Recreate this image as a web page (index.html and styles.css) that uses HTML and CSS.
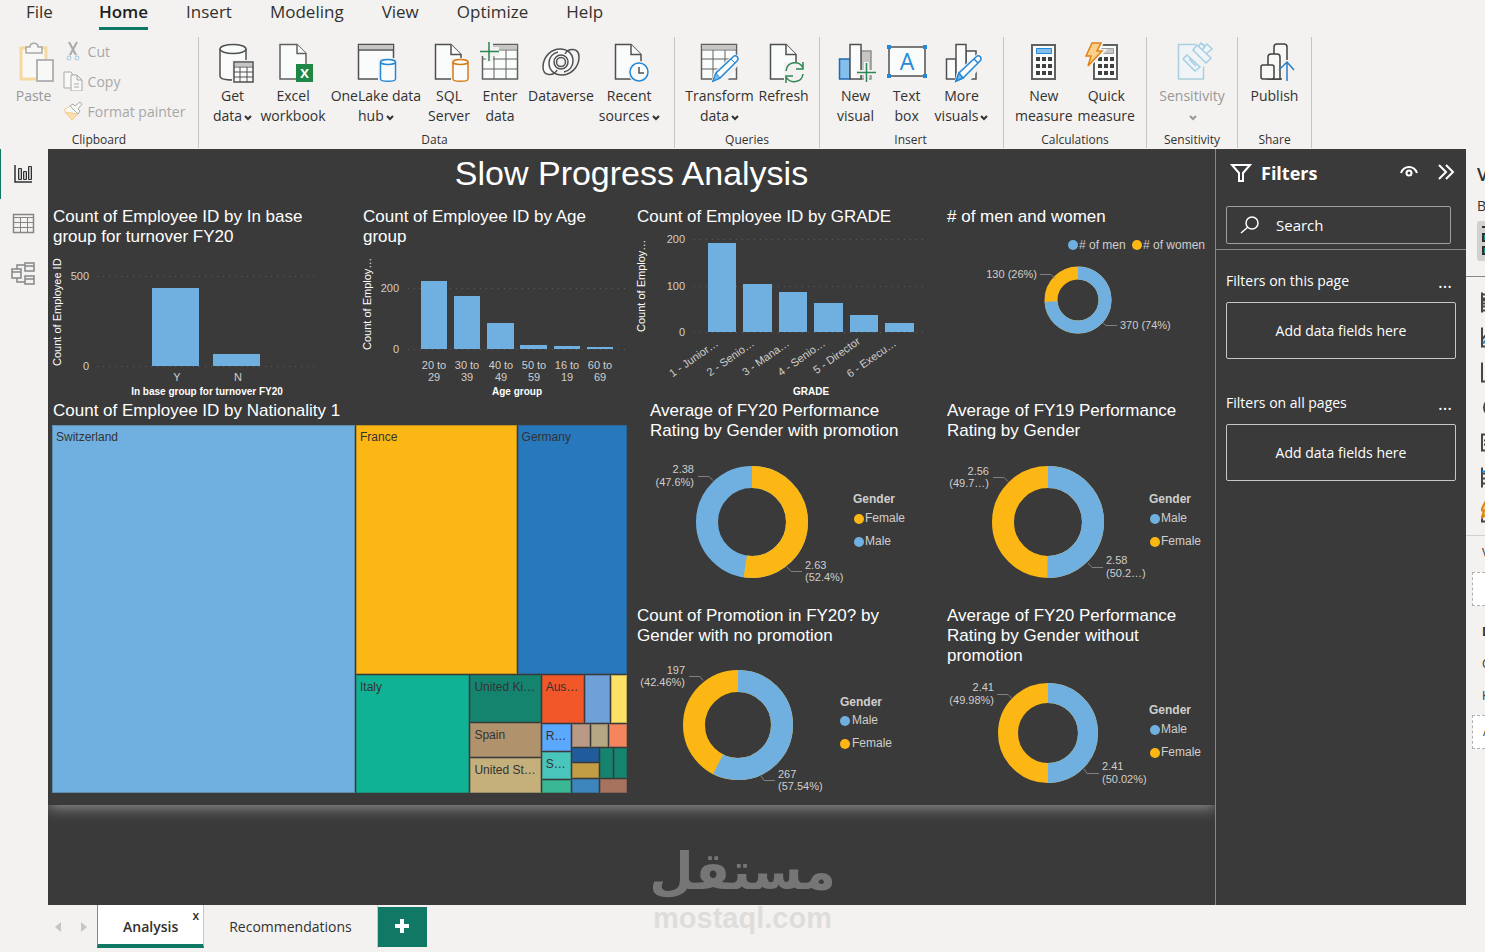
FILE: index.html
```html
<!DOCTYPE html>
<html lang="en">
<head>
    <meta charset="utf-8">
    <title>Slow Progress Analysis</title>
    <link rel="stylesheet" href="styles.css">
</head>
<body>

<header class="ribbon">
    <nav class="menu">
        <a href="#">File</a>
        <a href="#" class="active">Home</a>
        <a href="#">Insert</a>
        <a href="#">Modeling</a>
        <a href="#">View</a>
        <a href="#">Optimize</a>
        <a href="#">Help</a>
    </nav>

    <div class="groups">
        <!-- Clipboard -->
        <section class="group g-clipboard">
            <div class="tools">
                <button class="tool" disabled>
                    <svg class="icon" viewBox="0 0 40 40" fill="#f8f8f7" stroke-width="2">
                        <path d="M7 6h25v31H7z" stroke="#f7d9a0" stroke-width="3"/>
                        <path d="M12 5h4c0-5 8-5 8 0h4v6H12z" stroke="#a8a8a8" stroke-width="1.500"/>
                        <path d="M23 18h16v21H23z" stroke="#b4b4b4"/>
                    </svg>
                    <span>Paste</span>
                </button>
                <div class="small-tools">
                    <button class="small-tool" disabled>
                        <svg viewBox="0 0 20 20" fill="none" stroke="#a9a9a9"><path d="M6 1l7 13M14 1L7 14" stroke-width="2"/><circle cx="6" cy="17" r="2" stroke="#9cc7de"/><circle cx="14" cy="17" r="2" stroke="#9cc7de"/></svg>
                        <span>Cut</span>
                    </button>
                    <button class="small-tool" disabled>
                        <svg viewBox="0 0 20 20" fill="#f8f8f7" stroke="#a9a9a9"><path d="M8 17H1V1h7l2 3"/><path d="M8 4h6l5 5v11H8zM14 4v5h5M11 13h5M11 16h5"/></svg>
                        <span>Copy</span>
                    </button>
                    <button class="small-tool" disabled>
                        <svg viewBox="0 0 20 20" fill="#f8f8f7" stroke="#a9a9a9"><path d="M1 9l8 9 6-5-8-8z" stroke="#f2cd8c"/><path d="M2 11l7 8 6-6z" fill="#f9dfae" stroke="#f2cd8c"/><path d="M7 5l8 8 2-3-2-2 4-5-2-2-5 4-2-2z"/></svg>
                        <span>Format painter</span>
                    </button>
                </div>
            </div>
            <h2>Clipboard</h2>
        </section>

        <!-- Data -->
        <section class="group g-data">
            <div class="tools">
                <button class="tool">
                    <svg class="icon" viewBox="0 0 40 40" fill="#fafcfb" stroke="#505050">
                        <path d="M7 7v27c0 3 6 4 13 4s13-1 13-4V7" stroke-width="1.5"/>
                        <ellipse cx="20" cy="7" rx="13" ry="4.5" stroke-width="1.5"/>
                        <path d="M19 18h23v23H19z" fill="#f3f2f1" stroke="none"/>
                        <path d="M21 20h19v20H21z" stroke-width="1.5"/>
                        <path d="M22 21h17v3H22z" fill="#c8c6c4" stroke="none"/>
                        <path d="M21 25h19M21 30h19M21 35h19M27 25v15M34 25v15"/>
                    </svg>
                    <span>Get<br>data<svg class="chev" viewBox="0 0 8 6"><path d="M1 1l3 3 3-3"/></svg></span>
                </button>
                <button class="tool">
                    <svg class="icon" viewBox="0 0 40 40" fill="#fafcfb" stroke="#606060" stroke-width="1.5">
                        <path d="M7 2.500h17l9 9V37H7z"/><path d="M24 2.500v9h9"/>
                        <path d="M23 22h17v18H23z" fill="#1e8745" stroke="none"/>
                        <text x="31.500" y="36" class="excel-x">X</text>
                    </svg>
                    <span>Excel<br>workbook</span>
                </button>
                <button class="tool">
                    <svg class="icon" viewBox="0 0 40 40" fill="#fafcfb" stroke="#505050" stroke-width="1.500">
                        <path d="M2.500 2.500h35V37h-35z"/><path d="M3 3h34v4H3z" fill="#c8c6c4" stroke="none"/><path d="M2 8h36"/>
                        <path d="M22 16h20v26H22z" fill="#f3f2f1" stroke="none"/>
                        <path d="M24.500 20v17c0 3 15 3 15 0V20" stroke="#2488d8"/><ellipse cx="32" cy="20" rx="7.500" ry="2.500" stroke="#2488d8"/>
                    </svg>
                    <span>OneLake data<br>hub<svg class="chev" viewBox="0 0 8 6"><path d="M1 1l3 3 3-3"/></svg></span>
                </button>
                <button class="tool">
                    <svg class="icon" viewBox="0 0 40 40" fill="#fafcfb" stroke="#505050" stroke-width="1.500">
                        <path d="M6.500 2.500H22l10 10V37H6.500z"/><path d="M22 2.500v10h10"/>
                        <path d="M22 16h20v26H22z" fill="#f3f2f1" stroke="none"/>
                        <path d="M24 20v17c0 3 15 3 15 0V20" stroke="#d87b16"/><ellipse cx="31.500" cy="20" rx="7.500" ry="2.500" stroke="#d87b16"/>
                    </svg>
                    <span>SQL<br>Server</span>
                </button>
                <button class="tool">
                    <svg class="icon" viewBox="0 0 40 40" fill="#fafcfb" stroke="#606060">
                        <path d="M2.500 2.500h35V37h-35z" stroke-width="1.500"/><path d="M3 3h34v4H3z" fill="#c8c6c4" stroke="none"/>
                        <path d="M2 8h36M2 17h36M2 27h36M14 8v29M26 8v29"/>
                        <path d="M-1 -1h14v6h6v9h-6v6H6v-6H-1z" fill="#f3f2f1" stroke="none"/>
                        <path d="M9 0v19M0 9.500h19" stroke="#2c8553" stroke-width="1.500"/>
                    </svg>
                    <span>Enter<br>data</span>
                </button>
                <button class="tool">
                    <svg class="icon" viewBox="0 0 40 40" fill="#fafcfb" stroke="#505050" stroke-width="1.500">
                        <path d="M16 28c-3 6-14 7-14-3C2 14 11 7 19 7c8 0 13 5 13 12 0 6-4 10-9 11"/>
                        <path d="M24 12c3-6 14-7 14 3 0 11-9 18-17 18-8 0-13-5-13-12 0-6 4-10 9-11" fill="none"/>
                        <circle cx="20" cy="20" r="7" fill="none"/>
                        <circle cx="20" cy="20" r="4.500" fill="#f3f2f1"/>
                    </svg>
                    <span>Dataverse</span>
                </button>
                <button class="tool">
                    <svg class="icon" viewBox="0 0 40 40" fill="#fafcfb" stroke="#505050" stroke-width="1.500">
                        <path d="M6.500 2.500H22l10 10V37H6.500z"/><path d="M22 2.500v10h10"/>
                        <circle cx="30" cy="30" r="11" fill="#f3f2f1" stroke="none"/>
                        <circle cx="30" cy="30" r="9" stroke="#2488d8"/><path d="M30 25v6h5" fill="none"/>
                    </svg>
                    <span>Recent<br>sources<svg class="chev" viewBox="0 0 8 6"><path d="M1 1l3 3 3-3"/></svg></span>
                </button>
            </div>
            <h2>Data</h2>
        </section>

        <!-- Queries -->
        <section class="group g-queries">
            <div class="tools">
                <button class="tool">
                    <svg class="icon" viewBox="0 0 40 40" fill="#fafcfb" stroke="#606060">
                        <path d="M2.500 2.500h35V37h-35z" stroke-width="1.500"/><path d="M3 3h34v4H3z" fill="#c8c6c4" stroke="none"/>
                        <path d="M2 8h36M2 17h36M2 27h36M14 8v29M26 8v29"/>
                        <path d="M12 42l3-12 20-18 7 2v5L26 42z" fill="#f3f2f1" stroke="none"/>
                        <path d="M14 39l3-8 17-16c3-3 7 1 4 4L21 36z" stroke="#2488d8" stroke-width="1.500"/><path d="M14 39l3-8 4 5z" fill="#7db9e8" stroke="#2488d8"/><path d="M32 17l4 4" stroke="#2488d8"/>
                    </svg>
                    <span>Transform<br>data<svg class="chev" viewBox="0 0 8 6"><path d="M1 1l3 3 3-3"/></svg></span>
                </button>
                <button class="tool">
                    <svg class="icon" viewBox="0 0 40 40" fill="#fafcfb" stroke="#505050" stroke-width="1.500">
                        <path d="M6.500 2.500H22l10 10V37H6.500z"/><path d="M22 2.500v10h10"/>
                        <path d="M20 20h22v22H20z" fill="#f3f2f1" stroke="none"/>
                        <path d="M22 29c1-10 14-11 17-3M39 20v7h-7M39 32c-1 9-13 10-17 3M22 41v-7h7" fill="none" stroke="#2c8553"/>
                    </svg>
                    <span>Refresh</span>
                </button>
            </div>
            <h2>Queries</h2>
        </section>

        <!-- Insert -->
        <section class="group g-insert">
            <div class="tools">
                <button class="tool">
                    <svg class="icon" viewBox="0 0 40 40" fill="#fafcfb" stroke="#505050" stroke-width="1.500">
                        <path d="M25 9h10v28H25z" fill="#c8c6c4" stroke="#909090"/>
                        <path d="M3.500 17H14v20H3.500z" fill="#83beec" stroke="#1f6cb0"/><path d="M14 2.500h11V37H14z"/>
                        <path d="M28 20h5v8h8v5h-8v8h-5v-8h-8v-5h8z" fill="#f3f2f1" stroke="none"/>
                        <path d="M30.500 21v19M21 30.500h19" stroke="#2c8553"/>
                    </svg>
                    <span>New<br>visual</span>
                </button>
                <button class="tool">
                    <svg class="icon" viewBox="0 0 40 40" fill="#fafcfb" stroke="#505050" stroke-width="1.500">
                        <path d="M2 5h36v29H2z"/>
                        <path d="M0 3h4v4H0zM36 3h4v4h-4zM0 32h4v4H0zM36 32h4v4h-4z" fill="#2488d8" stroke="none"/>
                        <text x="20" y="28" class="box-a">A</text>
                    </svg>
                    <span>Text<br>box</span>
                </button>
                <button class="tool">
                    <svg class="icon" viewBox="0 0 40 40" fill="#fafcfb" stroke="#505050" stroke-width="1.500">
                        <path d="M24 9h10v28H24z"/><path d="M4.500 17H14v20H4.500z"/><path d="M14 2.500h10V37H14z"/>
                        <path d="M12 42l3-12 20-18 7 2v5L26 42z" fill="#f3f2f1" stroke="none"/>
                        <path d="M14 39l3-8 17-16c3-3 7 1 4 4L21 36z" stroke="#2488d8"/><path d="M14 39l3-8 4 5z" fill="#7db9e8" stroke="#2488d8"/><path d="M32 17l4 4" stroke="#2488d8"/>
                    </svg>
                    <span>More<br>visuals<svg class="chev" viewBox="0 0 8 6"><path d="M1 1l3 3 3-3"/></svg></span>
                </button>
            </div>
            <h2>Insert</h2>
        </section>

        <!-- Calculations -->
        <section class="group g-calc">
            <div class="tools">
                <button class="tool">
                    <svg class="icon" viewBox="0 0 40 40" fill="#fafcfb" stroke="#606060" stroke-width="2">
                        <path d="M8 3h23v34H8z"/><path d="M12.500 6.500h15v5h-15z" fill="#83beec" stroke="#2488d8" stroke-width="1"/>
                        <path d="M12 17h16M12 24h16M12 31h16" stroke="#404040" stroke-width="4" stroke-dasharray="4 2"/>
                    </svg>
                    <span>New<br>measure</span>
                </button>
                <button class="tool">
                    <svg class="icon" viewBox="0 0 40 40" fill="#fafcfb" stroke="#606060" stroke-width="2">
                        <path d="M8 3h23v34H8z"/><path d="M12.500 6.500h15v5h-15z" fill="#c8c6c4" stroke="#a0a0a0" stroke-width="1"/>
                        <path d="M12 17h16M12 24h16M12 31h16" stroke="#404040" stroke-width="4" stroke-dasharray="4 2"/>
                        <path d="M6 0h10l-4 9h5L1 25l3-11H0z" fill="#fbd08a" stroke="#f3f2f1" stroke-width="4"/>
                        <path d="M6 1h9l-4 8h5L2 24l3-10H0z" fill="#fbd08a" stroke="#e08214" stroke-width="1.500"/>
                    </svg>
                    <span>Quick<br>measure</span>
                </button>
            </div>
            <h2>Calculations</h2>
        </section>

        <!-- Sensitivity -->
        <section class="group g-sens">
            <div class="tools">
                <button class="tool" disabled>
                    <svg class="icon" viewBox="0 0 40 40" fill="#f0f4f6" stroke="#a3cfe6" stroke-width="1.500">
                        <path d="M6.500 2.500h25V37h-25z" stroke="#a9cfdc"/>
                        <path d="M17 11l14 14 10-9L26 0z" fill="#f3f2f1" stroke="none"/>
                        <path d="M15 13l13 12-5 4-12-12zM17 17l7 7"/><path d="M21 8l4-5 14 13-5 5zM26 5l3-4 4 4M30 8l5-6 5 5-6 5"/>
                    </svg>
                    <span>Sensitivity<br><svg class="chev" viewBox="0 0 8 6"><path d="M1 1l3 3 3-3"/></svg></span>
                </button>
            </div>
            <h2>Sensitivity</h2>
        </section>

        <!-- Share -->
        <section class="group g-share">
            <div class="tools">
                <button class="tool">
                    <svg class="icon" viewBox="0 0 40 40" fill="#f8f8f7" stroke="#404040" stroke-width="1.500">
                        <path d="M19 14V5c0-2 1-3 3-3h7c2 0 3 1 3 3v32H19z"/>
                        <path d="M13 24v-9c0-2 1-3 3-3h6c2 0 3 1 3 3v22H13z"/>
                        <rect x="6" y="23" width="13" height="14" rx="2"/>
                        <path d="M27 18h13v22H27z" fill="#f3f2f1" stroke="none"/>
                        <path d="M32 39V21M24 28l8-8 7 8" fill="none" stroke="#2a7fc4"/>
                    </svg>
                    <span>Publish</span>
                </button>
            </div>
            <h2>Share</h2>
        </section>
    </div>
</header>

<main class="workspace">
    <nav class="views">
        <button class="view active" aria-label="Report view">
            <svg viewBox="0 0 24 24" fill="#b8b8b8" stroke="#303030"><path d="M4 3v17h17" fill="none" stroke-width="1.500"/><path d="M7.500 6.500h3v11h-3zM12.500 9.500h3v8h-3zM17.500 4.500h3v13h-3z"/></svg>
        </button>
        <button class="view" aria-label="Table view">
            <svg viewBox="0 0 24 24" fill="none" stroke="#868686"><path d="M2.500 2.500h20v18h-20z" stroke-width="1.500"/><path d="M2 5.500h21M2 10.500h21M2 15.500h21M9.500 5v16M16.500 5v16"/></svg>
        </button>
        <button class="view" aria-label="Model view">
            <svg viewBox="0 0 24 24" fill="none" stroke="#868686" stroke-width="1.500"><path d="M1 7h9v9H1zM14 1h9v8h-9zM14 14h9v8h-9zM1 10h9M14 4h9M14 17h9M6 7V3h8M6 16v4h8"/></svg>
        </button>
    </nav>

    <div class="canvas">
        <div class="report">
            <h1>Slow Progress Analysis</h1>

            <div class="visuals">
                <section class="visual">
                    <h3>Count of Employee ID by In base group for turnover FY20</h3>
                    <svg class="chart" width="300" height="154">
                        <path class="grid-line" d="M49 29.500h221M49 119.500h221"/>
                        <rect class="bar" x="104" y="41" width="47" height="78"/>
                        <rect class="bar" x="165" y="107" width="47" height="12"/>
                        <g class="end"><text x="41" y="33">500</text><text x="41" y="123">0</text></g>
                        <g class="mid"><text x="129" y="134">Y</text><text x="190" y="134">N</text><text class="axis-title" x="159" y="148">In base group for turnover FY20</text></g>
                        <text class="y-title" transform="translate(13 119) rotate(-90)">Count of Employee ID</text>
                    </svg>
                </section>

                <section class="visual">
                    <h3>Count of Employee ID by Age group</h3>
                    <svg class="chart" width="270" height="154">
                        <path class="grid-line" d="M50 41.500h219M50 102.500h219"/>
                        <rect class="bar" x="63" y="34" width="26" height="68"/>
                        <rect class="bar" x="96" y="49" width="26" height="53"/>
                        <rect class="bar" x="129" y="76" width="27" height="26"/>
                        <rect class="bar" x="162" y="98" width="27" height="4"/>
                        <rect class="bar" x="196" y="99" width="26" height="3"/>
                        <rect class="bar" x="229" y="100" width="26" height="2"/>
                        <g class="end"><text x="41" y="45">200</text><text x="41" y="106">0</text></g>
                        <g class="mid">
                            <text x="76" y="122">20 to<tspan x="76" dy="12">29</tspan></text>
                            <text x="109" y="122">30 to<tspan x="109" dy="12">39</tspan></text>
                            <text x="143" y="122">40 to<tspan x="143" dy="12">49</tspan></text>
                            <text x="176" y="122">50 to<tspan x="176" dy="12">59</tspan></text>
                            <text x="209" y="122">16 to<tspan x="209" dy="12">19</tspan></text>
                            <text x="242" y="122">60 to<tspan x="242" dy="12">69</tspan></text>
                            <text class="axis-title" x="159" y="148">Age group</text>
                        </g>
                        <text class="y-title" transform="translate(13 103) rotate(-90)">Count of Employ…</text>
                    </svg>
                </section>

                <section class="visual">
                    <h3>Count of Employee ID by GRADE</h3>
                    <svg class="chart" width="300" height="174">
                        <path class="grid-line" d="M62 12.500h232M62 59.500h232M62 105.500h232"/>
                        <rect class="bar" x="76" y="16" width="28" height="89"/>
                        <rect class="bar" x="111" y="57" width="29" height="48"/>
                        <rect class="bar" x="147" y="65" width="28" height="40"/>
                        <rect class="bar" x="182" y="76" width="29" height="29"/>
                        <rect class="bar" x="218" y="88" width="28" height="17"/>
                        <rect class="bar" x="253" y="96" width="29" height="9"/>
                        <g class="end">
                            <text x="53" y="16">200</text><text x="53" y="63">100</text><text x="53" y="109">0</text>
                            <text transform="translate(87 118) rotate(-35)">1 - Junior…</text>
                            <text transform="translate(123 118) rotate(-35)">2 - Senio…</text>
                            <text transform="translate(158 118) rotate(-35)">3 - Mana…</text>
                            <text transform="translate(194 118) rotate(-35)">4 - Senio…</text>
                            <text transform="translate(229 116) rotate(-35)">5 - Director</text>
                            <text transform="translate(265 118) rotate(-35)">6 - Execu…</text>
                        </g>
                        <text class="mid axis-title" x="179" y="168">GRADE</text>
                        <text class="y-title" transform="translate(13 105) rotate(-90)">Count of Employ…</text>
                    </svg>
                </section>

                <section class="visual">
                    <h3># of men and women</h3>
                    <svg class="chart" width="270" height="174">
                        <circle class="men-dot" cx="131" cy="18" r="5"/><text class="legend" x="137" y="22"># of men</text>
                        <circle class="women-dot" cx="195" cy="18" r="5"/><text class="legend" x="201" y="22"># of women</text>
                        <g fill="none" stroke-width="13" transform="translate(136 73) rotate(-90)">
                            <circle class="women" r="27"/><circle class="men" r="27" pathLength="100" stroke-dasharray="74 26"/>
                        </g>
                        <path class="leader" d="M98 47.500h11l4 4M161 96l3 2.500h11"/>
                        <text class="end" x="95" y="51">130 (26%)</text><text x="178" y="102">370 (74%)</text>
                    </svg>
                </section>

                <section class="visual treemap-visual">
                    <h3>Count of Employee ID by Nationality 1</h3>
                    <div class="treemap">
                        <div class="cell c-blue" style="flex-grow:303">Switzerland</div>
                        <div class="col" style="flex-grow:271">
                            <div class="row" style="flex-grow:248">
                                <div class="cell c-amber" style="flex-grow:160">France</div>
                                <div class="cell c-royal" style="flex-grow:109">Germany</div>
                            </div>
                            <div class="row" style="flex-grow:118">
                                <div class="cell c-mint" style="flex-grow:113">Italy</div>
                                <div class="col" style="flex-grow:70">
                                    <div class="cell c-teal" style="flex-grow:47">United Ki…</div>
                                    <div class="cell c-tan" style="flex-grow:34">Spain</div>
                                    <div class="cell c-sand" style="flex-grow:35">United St…</div>
                                </div>
                                <div class="col" style="flex-grow:85">
                                    <div class="row" style="flex-grow:49">
                                        <div class="cell c-red" style="flex-grow:42">Aus…</div>
                                        <div class="cell c-sky" style="flex-grow:25"></div>
                                        <div class="cell c-yellow" style="flex-grow:16"></div>
                                    </div>
                                    <div class="row" style="flex-grow:69">
                                        <div class="col" style="flex-grow:29">
                                            <div class="cell c-azure" style="flex-grow:26">R…</div>
                                            <div class="cell c-aqua" style="flex-grow:26">S…</div>
                                            <div class="cell c-green" style="flex-grow:13"></div>
                                        </div>
                                        <div class="col" style="flex-grow:54">
                                            <div class="row" style="flex-grow:22">
                                                <div class="cell c-rose" style="flex-grow:17"></div>
                                                <div class="cell c-khaki" style="flex-grow:17"></div>
                                                <div class="cell c-coral" style="flex-grow:17"></div>
                                            </div>
                                            <div class="row" style="flex-grow:30">
                                                <div class="col" style="flex-grow:26">
                                                    <div class="cell c-navy" style="flex-grow:14"></div>
                                                    <div class="cell c-gold" style="flex-grow:14"></div>
                                                </div>
                                                <div class="cell c-teal" style="flex-grow:13"></div>
                                                <div class="cell c-teal" style="flex-grow:13"></div>
                                            </div>
                                            <div class="row" style="flex-grow:14">
                                                <div class="cell c-steel" style="flex-grow:26"></div>
                                                <div class="cell c-brown" style="flex-grow:27"></div>
                                            </div>
                                        </div>
                                    </div>
                                </div>
                            </div>
                        </div>
                    </div>
                </section>

                <section class="visual">
                    <h3 class="indent">Average of FY20 Performance Rating by Gender with promotion</h3>
                    <svg class="chart" width="300" height="160">
                        <g fill="none" stroke-width="22" transform="translate(120 81) rotate(-90)">
                            <circle class="men" r="45"/><circle class="women" r="45" pathLength="100" stroke-dasharray="52.400 47.600"/>
                        </g>
                        <path class="leader" d="M66 35.500h11l4 4M155 126l4 4.500h11"/>
                        <text class="end" x="62" y="32">2.38<tspan x="62" dy="13">(47.6%)</tspan></text>
                        <text x="173" y="128">2.63<tspan x="173" dy="12">(52.4%)</tspan></text>
                        <text class="legend legend-title" x="221" y="62">Gender</text>
                        <circle class="women-dot" cx="227" cy="78" r="5"/><text class="legend" x="233" y="81">Female</text>
                        <circle class="men-dot" cx="227" cy="101" r="5"/><text class="legend" x="233" y="104">Male</text>
                    </svg>
                </section>

                <section class="visual">
                    <h3>Average of FY19 Performance Rating by Gender</h3>
                    <svg class="chart" width="270" height="160">
                        <g fill="none" stroke-width="22" transform="translate(106 81) rotate(-90)">
                            <circle class="women" r="45"/><circle class="men" r="45" pathLength="100" stroke-dasharray="50.200 49.800"/>
                        </g>
                        <path class="leader" d="M51 36.500h11l4 4M146 122l4 4.500h11"/>
                        <text class="end" x="47" y="34">2.56<tspan x="47" dy="12">(49.7…)</tspan></text>
                        <text x="164" y="123">2.58<tspan x="164" dy="13">(50.2…)</tspan></text>
                        <text class="legend legend-title" x="207" y="62">Gender</text>
                        <circle class="men-dot" cx="213" cy="78" r="5"/><text class="legend" x="219" y="81">Male</text>
                        <circle class="women-dot" cx="213" cy="101" r="5"/><text class="legend" x="219" y="104">Female</text>
                    </svg>
                </section>

                <section class="visual">
                    <h3>Count of Promotion in FY20? by Gender with no promotion</h3>
                    <svg class="chart" width="300" height="154">
                        <g fill="none" stroke-width="22" transform="translate(106 79) rotate(-90)">
                            <circle class="women" r="44"/><circle class="men" r="44" pathLength="100" stroke-dasharray="57.500 42.500"/>
                        </g>
                        <path class="leader" d="M57 30.500h11l3 4M129 130l3 4.500h11"/>
                        <text class="end" x="53" y="28">197<tspan x="53" dy="12">(42.46%)</tspan></text>
                        <text x="146" y="132">267<tspan x="146" dy="12">(57.54%)</tspan></text>
                        <text class="legend legend-title" x="208" y="60">Gender</text>
                        <circle class="men-dot" cx="213" cy="75" r="5"/><text class="legend" x="220" y="78">Male</text>
                        <circle class="women-dot" cx="213" cy="98" r="5"/><text class="legend" x="220" y="101">Female</text>
                    </svg>
                </section>

                <section class="visual">
                    <h3>Average of FY20 Performance Rating by Gender without promotion</h3>
                    <svg class="chart" width="270" height="134">
                        <g fill="none" stroke-width="20" transform="translate(106 67) rotate(-90)">
                            <circle class="women" r="40"/><circle class="men" r="40" pathLength="100" stroke-dasharray="50 50"/>
                        </g>
                        <path class="leader" d="M55 28.500h11l4 4M142 103l3 4.500h12"/>
                        <text class="end" x="52" y="25">2.41<tspan x="52" dy="13">(49.98%)</tspan></text>
                        <text x="160" y="104">2.41<tspan x="160" dy="13">(50.02%)</tspan></text>
                        <text class="legend legend-title" x="207" y="48">Gender</text>
                        <circle class="men-dot" cx="213" cy="64" r="5"/><text class="legend" x="219" y="67">Male</text>
                        <circle class="women-dot" cx="213" cy="87" r="5"/><text class="legend" x="219" y="90">Female</text>
                    </svg>
                </section>
            </div>
        </div>
    </div>

    <aside class="filters">
        <div class="filters-top">
            <div class="filters-head">
                <svg width="22" height="20" viewBox="0 0 22 20" fill="none" stroke="#fff" stroke-width="2"><path d="M2 2h18l-7 8v8H9v-8z"/></svg>
                <h2>Filters</h2>
                <button aria-label="Show or hide filter pane">
                    <svg width="18" height="14" viewBox="0 0 18 14" fill="none" stroke="#fff" stroke-width="2"><path d="M1 8c3-8 13-8 16 0"/><circle cx="9" cy="8" r="2.500"/></svg>
                </button>
                <button aria-label="Collapse">
                    <svg width="18" height="16" viewBox="0 0 18 16" fill="none" stroke="#fff" stroke-width="2"><path d="M2 1l7 7-7 7M9 1l7 7-7 7"/></svg>
                </button>
            </div>
            <label class="search">
                <svg width="20" height="18" viewBox="0 0 20 18" fill="none" stroke="#fff" stroke-width="1.500"><circle cx="12" cy="7" r="6"/><path d="M8 11l-7 6"/></svg>
                <input type="text" placeholder="Search" aria-label="Search">
            </label>
        </div>
        <section class="filter-section">
            <h3>Filters on this page <button aria-label="More options">…</button></h3>
            <div class="drop">Add data fields here</div>
        </section>
        <section class="filter-section">
            <h3>Filters on all pages <button aria-label="More options">…</button></h3>
            <div class="drop">Add data fields here</div>
        </section>
    </aside>

    <aside class="viz">
        <h2>Visualizations</h2>
        <p class="viz-build">Build visual</p>
        <div class="viz-mode">
            <svg width="24" height="32" viewBox="0 0 24 32" fill="#2a9d84" stroke="#303030" stroke-width="2"><path d="M0 2h24"/><path d="M1 9h14v7H1zM1 22h18v7H1z"/></svg>
        </div>
        <div class="viz-icons">
            <svg viewBox="0 0 20 20"><path d="M1 0v20M1 2h12v4H1M1 8h14v3H1M1 14h10v4H1"/></svg>
            <svg viewBox="0 0 20 20"><path d="M1 0v19h19M1 12l6-7 6 5"/><path class="blue" d="M2 16l5-6 6 4"/></svg>
            <svg viewBox="0 0 20 20"><path d="M1 0v19h19M4 6h3v13M11 2h3v17"/></svg>
            <svg viewBox="0 0 20 20"><circle cx="11" cy="10" r="8"/></svg>
            <svg viewBox="0 0 20 20"><path d="M1 2h18v16H1zM3 8h6M3 12h9"/></svg>
            <svg viewBox="0 0 20 20"><path d="M1 0v20M1 6h16M1 11h16M1 16h16"/><path class="blue" d="M1 4h16"/></svg>
            <svg viewBox="0 0 20 20"><path d="M1 14v5h18"/><path class="bolt" d="M4 0h8L8 7h4L1 15l2-7H0z"/></svg>
        </div>
        <p class="viz-label">Values</p>
        <div class="viz-well"></div>
        <p class="viz-label"><b>Drill through</b></p>
        <p class="viz-label">Cross-report</p>
        <p class="viz-label">Keep all filters</p>
        <div class="viz-well">Add drill-through fields here</div>
    </aside>
</main>

<footer class="pages">
    <button class="arrow" aria-label="Previous page"><svg width="6" height="10" viewBox="0 0 6 10"><path d="M6 0v10L0 5z"/></svg></button>
    <button class="arrow" aria-label="Next page"><svg width="6" height="10" viewBox="0 0 6 10"><path d="M0 0v10l6-5z"/></svg></button>
    <div class="page active"><a href="#">Analysis</a><button class="close" aria-label="Close page">x</button></div>
    <div class="page"><a href="#">Recommendations</a></div>
    <button class="add" aria-label="New page"><svg width="14" height="14" viewBox="0 0 14 14"><path d="M7 0v14M0 7h14"/></svg></button>
</footer>

<div class="watermark"><span lang="ar">مستقل</span><b>mostaql.com</b></div>

</body>
</html>
```
FILE: styles.css
```css
:root {
    --chrome: #f3f2f1;
    --dark: #3a3a3a;
    --green: #117865;
    --blue: #70b0e0;
    --amber: #fcb714;
    --text: #323130;
    --line: #c8c6c4;
}

* {
    box-sizing: border-box;
    margin: 0;
}

body {
    position: relative;
    display: flex;
    flex-direction: column;
    min-height: 100vh;
    background: var(--chrome);
    color: var(--text);
    font-family: "Open Sans", "Noto Sans", sans-serif;
    font-size: 14px;
    overflow-x: hidden;
}

button {
    padding: 0;
    border: 0;
    background: none;
    color: inherit;
    font: inherit;
}

a {
    color: inherit;
    text-decoration: none;
}

/* Ribbon */
.menu {
    display: flex;
    gap: 38px;
    height: 37px;
    padding-left: 26px;
    font-size: 17px;
    line-height: 24px;
}

.menu a {
    height: 30px;
}

.menu .active {
    margin-left: 8px;
    border-bottom: 3px solid var(--green);
    font-weight: 600;
    color: #201f1e;
}

.groups {
    display: flex;
    height: 112px;
    padding-bottom: 1px;
}

.group {
    display: flex;
    flex-direction: column;
    justify-content: space-between;
    align-items: center;
    padding-top: 5px;
    border-right: 1px solid var(--line);
}

.group h2 {
    font-size: 12px;
    font-weight: 400;
    line-height: 16px;
}

.g-clipboard { width: 199px; }
.g-data { width: 476px; padding-right: 4px; }
.g-queries { width: 145px; }
.g-insert { width: 184px; padding-right: 2px; }
.g-calc { width: 143px; }
.g-sens { width: 91px; }
.g-share { width: 74px; }

.tools {
    display: flex;
    gap: 1px;
    white-space: nowrap;
}

.tool {
    display: flex;
    flex-direction: column;
    align-items: center;
    min-width: 50px;
    padding: 0 2px;
    line-height: 20px;
}

.tool:disabled,
.small-tool:disabled {
    color: #a8a7a6;
}

.tool:disabled {
    color: #999897;
}

.icon {
    width: 40px;
    height: 40px;
    margin-bottom: 4px;
    overflow: visible;
}

.excel-x {
    font-size: 13px;
    font-weight: 700;
    text-anchor: middle;
    fill: #fff;
    stroke: none;
}

.box-a {
    font-size: 23px;
    text-anchor: middle;
    fill: #2488d8;
    stroke: none;
}

.chev {
    width: 8px;
    height: 6px;
    margin-left: 2px;
    fill: none;
    stroke: currentColor;
    stroke-width: 2;
}

.small-tools {
    display: flex;
    flex-direction: column;
}

.small-tool {
    display: flex;
    align-items: center;
    gap: 5px;
    height: 30px;
    padding-left: 3px;
}

.g-clipboard .tools {
    margin: -6px 4px 0 0;
}

.g-clipboard .tool {
    margin-top: 6px;
}

.small-tool svg {
    width: 20px;
    height: 20px;
}

/* Work area */
.workspace {
    display: flex;
    flex: 1;
}

.views {
    width: 48px;
}

.view {
    display: flex;
    align-items: center;
    width: 48px;
    height: 50px;
    padding-left: 10px;
    border-left: 1px solid transparent;
}

.view.active {
    border-color: var(--green);
}

.view svg {
    width: 24px;
    height: 24px;
}

.canvas {
    flex: 1;
    background: var(--dark);
}

.report {
    font-family: "Liberation Sans", Arial, sans-serif;
    color: #fff;
    background: var(--dark);
    box-shadow: 0 2px 14px #999;
    clip-path: inset(0 0 -20px 0);
    padding-bottom: 4px;
}

.report h1 {
    padding-bottom: 10px;
    font-size: 34px;
    font-weight: 400;
    line-height: 48px;
    text-align: center;
}

.visuals {
    display: grid;
    grid-template-columns: 310fr 274fr 310fr 273fr;
    grid-template-rows: 194px 205px 195px;
}

.visual {
    min-width: 0;
}

.visual h3 {
    padding: 0 15px 0 5px;
    font-size: 17px;
    font-weight: 400;
    line-height: 20px;
}

.visual h3.indent {
    padding-left: 18px;
}

.chart {
    display: block;
    overflow: visible;
    font-size: 11px;
    fill: #d0cecc;
}

.end { text-anchor: end; }
.mid { text-anchor: middle; }

.grid-line {
    fill: none;
    stroke: #5c5c5c;
    stroke-dasharray: 1 5;
}

.bar,
.men-dot {
    fill: var(--blue);
}

.women-dot {
    fill: var(--amber);
}

.men { stroke: var(--blue); }
.women { stroke: var(--amber); }

.leader {
    fill: none;
    stroke: #808080;
}

.axis-title {
    font-size: 10px;
    font-weight: 700;
    fill: #fff;
}

.y-title {
    fill: #fff;
}

.legend {
    font-size: 12px;
}

.legend-title {
    font-weight: 700;
}

/* Treemap */
.treemap-visual {
    display: flex;
    flex-direction: column;
    grid-column: 1 / 3;
    grid-row: 2 / 4;
    padding: 0 5px 8px 4px;
}

.treemap-visual h3 {
    padding: 0 0 4px 1px;
}

.treemap,
.row,
.col {
    display: flex;
    gap: 1px;
    flex-basis: 0;
    min-width: 0;
    min-height: 0;
}

.treemap {
    flex: 1;
}

.col {
    flex-direction: column;
}

.cell {
    flex-basis: 0;
    min-width: 0;
    min-height: 0;
    box-shadow: inset 0 0 0 1px rgba(58, 58, 58, 0.3);
    color: #333;
    font-size: 12px;
    line-height: 24px;
    text-indent: 4px;
    white-space: nowrap;
    overflow: hidden;
}

.c-blue { background: #70b0e0; }
.c-amber { background: #fcb714; }
.c-royal { background: #2878bd; }
.c-mint { background: #10b296; }
.c-teal { background: #14846f; }
.c-tan { background: #b0926c; }
.c-sand { background: #c5b07c; }
.c-red { background: #f2572a; }
.c-sky { background: #6fa0d8; }
.c-yellow { background: #ffe166; }
.c-azure { background: #5ba8ff; }
.c-aqua { background: #4ac5bb; }
.c-green { background: #3ab794; }
.c-rose { background: #b89a86; }
.c-khaki { background: #b5a684; }
.c-coral { background: #f5855c; }
.c-navy { background: #205c9c; }
.c-gold { background: #c39d45; }
.c-steel { background: #3d86bd; }
.c-brown { background: #a6735e; }

/* Filters pane */
.filters {
    width: 251px;
    background: var(--dark);
    border-left: 1px solid #8a8886;
    color: #fff;
}

.filters-top {
    height: 101px;
    padding: 12px 15px 0 10px;
    border-bottom: 1px solid #8a8886;
}

.filters-head {
    display: flex;
    align-items: center;
    gap: 9px;
    height: 24px;
    padding-left: 4px;
    margin-bottom: 21px;
}

.filters-head h2 {
    flex: 1;
    font-size: 18px;
    font-weight: 700;
}

.filters-head button {
    height: 18px;
    margin-right: -4px;
    margin-left: 14px;
}

.search {
    display: flex;
    align-items: center;
    gap: 14px;
    height: 38px;
    padding-left: 13px;
    border: 1px solid #a19f9d;
    border-radius: 2px;
}

.search input {
    flex: 1;
    min-width: 0;
    border: 0;
    outline: none;
    background: none;
    color: #fff;
    font: inherit;
    font-size: 15px;
}

.search input::placeholder {
    color: #fff;
}

.filter-section {
    padding: 20px 10px 0;
    margin-bottom: 13px;
}

.filter-section h3 {
    display: flex;
    justify-content: space-between;
    padding-right: 4px;
    margin-bottom: 10px;
    font-size: 14px;
    font-weight: 400;
    line-height: 22px;
}

.filter-section button {
    font-size: 18px;
}

.drop {
    display: flex;
    align-items: center;
    justify-content: center;
    height: 57px;
    border: 1px solid #c8c6c4;
    border-radius: 2px;
}

/* Visualizations pane, runs off the right edge */
.viz {
    width: 19px;
    overflow: hidden;
    white-space: nowrap;
}

.viz h2 {
    padding: 12px 0 8px 11px;
    font-size: 18px;
    font-weight: 600;
    line-height: 26px;
}

.viz-build {
    padding-left: 11px;
    line-height: 22px;
}

.viz-mode {
    width: 40px;
    height: 40px;
    margin: 4px 0 15px 11px;
    padding: 4px 5px;
    border-radius: 3px;
    background: #d2d0ce;
}

.viz-icons {
    display: flex;
    flex-direction: column;
    gap: 10px;
    width: 200px;
    padding: 13px 0 10px 15px;
    border-top: 1px solid #8a8886;
    border-bottom: 1px solid #d2d0ce;
}

.viz-icons svg {
    width: 20px;
    height: 25px;
    fill: none;
    stroke: #484644;
    stroke-width: 2;
}

.viz-icons .blue {
    stroke: #2488d8;
}

.viz-icons .bolt {
    fill: #fbd08a;
    stroke: #e08214;
}

.viz-label {
    padding: 8px 0 6px 16px;
    font-size: 12px;
    line-height: 18px;
}

.viz-well {
    width: 200px;
    height: 34px;
    margin: 4px 0 9px 6px;
    padding: 8px 10px;
    border: 1px dashed #b3b0ad;
    background: #fff;
    font-size: 12px;
    line-height: 16px;
}

/* Page tabs */
.pages {
    display: flex;
    height: 47px;
    padding-left: 45px;
}

.arrow {
    width: 26px;
    height: 43px;
    fill: #c8c6c4;
}

.page {
    display: flex;
    align-items: center;
    height: 43px;
    padding: 0 25px;
    border-right: 1px solid var(--line);
}

.page.active {
    position: relative;
    height: 43px;
    background: #fff;
    border-left: 1px solid #8a8886;
    border-bottom: 4px solid var(--green);
    font-weight: 600;
    padding-top: 4px;
}

.close {
    position: absolute;
    top: 2px;
    right: 4px;
    font-size: 12px;
}

.add {
    width: 49px;
    height: 40px;
    margin-top: 2px;
    background: var(--green);
}

.add svg {
    stroke: #fff;
    stroke-width: 4;
}

/* Watermark over the canvas and the tab bar */
.watermark {
    position: absolute;
    left: 50%;
    bottom: 18px;
    display: flex;
    flex-direction: column;
    align-items: center;
    transform: translateX(-50%);
    pointer-events: none;
}

.watermark span {
    color: #767676;
    font: 700 51px/60px "DejaVu Sans", sans-serif;
}

.watermark b {
    color: #deddda;
    font: 700 29px/32px "Liberation Sans", sans-serif;
}
```
